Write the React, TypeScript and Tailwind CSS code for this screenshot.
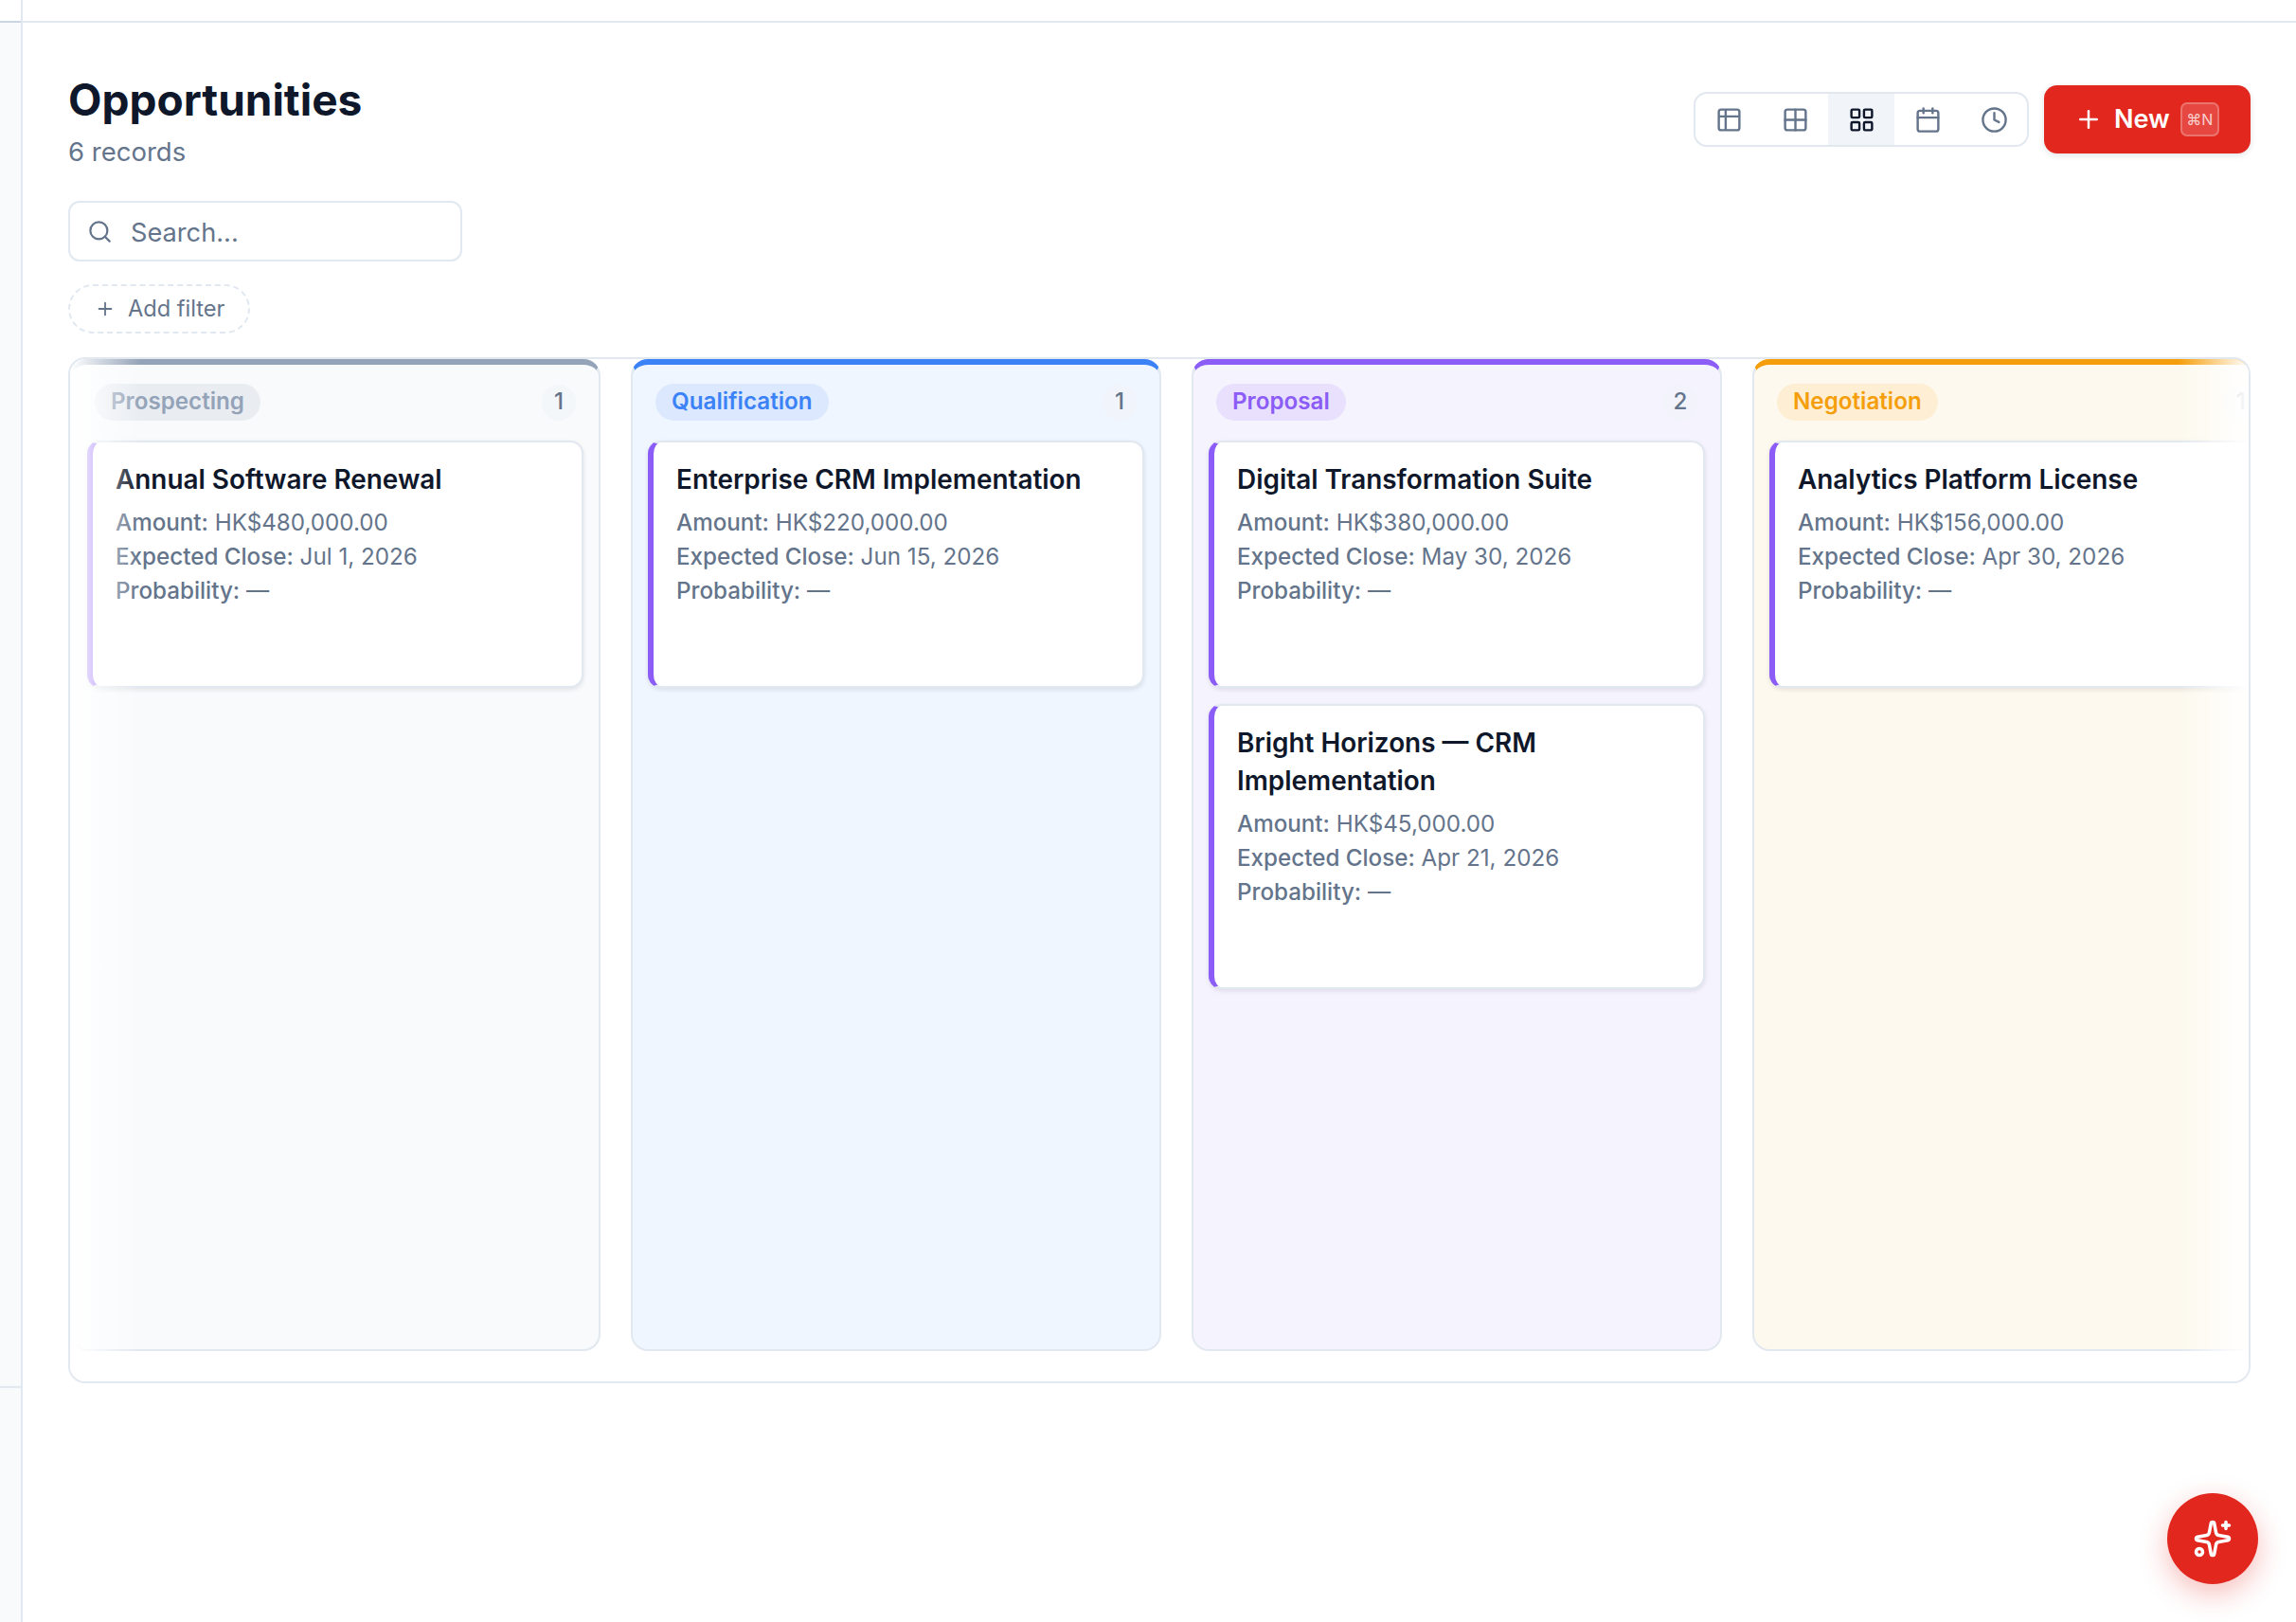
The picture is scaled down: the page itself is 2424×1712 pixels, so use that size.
import { Calendar, Clock, Grid2x2, LayoutGrid, Plus, Search, Sparkles, Table2 } from "lucide-react"

const columns = [
    {
        name: "Prospecting",
        count: 1,
        column: "bg-[#f8fafc] border-t-[#94a3b8]",
        badge: "bg-[#e9edf2] text-[#94a3b8]",
        cards: [{ title: "Annual Software Renewal", amount: "HK$480,000.00", close: "Jul 1, 2026" }],
    },
    {
        name: "Qualification",
        count: 1,
        column: "bg-[#eff6ff] border-t-[#3b82f6]",
        badge: "bg-[#dbe8fd] text-[#3b82f6]",
        cards: [{ title: "Enterprise CRM Implementation", amount: "HK$220,000.00", close: "Jun 15, 2026" }],
    },
    {
        name: "Proposal",
        count: 2,
        column: "bg-[#f5f3fe] border-t-[#8b5cf6]",
        badge: "bg-[#e8e0fd] text-[#8b5cf6]",
        cards: [
            { title: "Digital Transformation Suite", amount: "HK$380,000.00", close: "May 30, 2026" },
            { title: "Bright Horizons — CRM Implementation", amount: "HK$45,000.00", close: "Apr 21, 2026" },
        ],
    },
    {
        name: "Negotiation",
        count: 1,
        column: "bg-[#fdf9ee] border-t-[#f59e0b]",
        badge: "bg-[#fdeed4] text-[#f59e0b]",
        cards: [{ title: "Analytics Platform License", amount: "HK$156,000.00", close: "Apr 30, 2026" }],
    },
]

const views = [Table2, Grid2x2, LayoutGrid, Calendar, Clock]

function Card({ title, amount, close }: { title: string; amount: string; close: string }) {
    return (
        <div className="bg-white border-2 border-[#e2e8f0] border-l-[6px] border-l-[#8b5cf6] rounded-[14px] shadow-[0_2px_5px_rgba(15,23,42,0.1)] pl-[24px] pr-5 pt-[19px] pb-[82px]">
            <div className="text-[27.9px] leading-[40px] font-semibold text-[#0f172a]">{title}</div>
            <div className="mt-2 text-[24.2px] leading-[36px] text-[#64748b]">
                <div><span className="font-medium">Amount:</span> {amount}</div>
                <div><span className="font-medium">Expected Close:</span> {close}</div>
                <div><span className="font-medium">Probability:</span> —</div>
            </div>
        </div>
    )
}

export default function App() {
    return (
        <div className="relative flex h-screen overflow-hidden bg-white [font-family:Inter,sans-serif]">
            <div className="w-[24px] shrink-0 flex flex-col border-r-2 border-[#e2e8f0] bg-[#f8fafc]">
                <div className="h-[24px] shrink-0 bg-white border-b-2 border-[#cbd5e1]" />
                <div className="h-[1441px] shrink-0 border-b-2 border-[#e2e8f0]" />
            </div>

            <div className="flex-1 min-w-0">
                <div className="h-[24px] border-b-2 border-[#e2e8f0]" />
                <div className="pl-[48px] pr-[48px] pt-[53px]">
                    <div className="flex justify-between items-start">
                        <div>
                            <h1 className="text-[46px] leading-[56px] font-bold text-[#0f172a]">Opportunities</h1>
                            <div className="mt-[9px] text-[27.5px] leading-[36px] text-[#64748b]">6 records</div>
                        </div>
                        <div className="mt-[13px] flex items-center gap-[16px]">
                            <div className="flex border-2 border-[#e2e8f0] rounded-[14px] overflow-hidden h-[58px]">
                                {views.map((Icon, i) => (
                                    <div key={i} className={i === 2 ? "w-[70px] flex items-center justify-center bg-[#f1f5f9] text-[#0f172a]" : "w-[70px] flex items-center justify-center text-[#64748b]"}>
                                        <Icon size={29} />
                                    </div>
                                ))}
                            </div>
                            <button className="h-[72px] w-[218px] flex items-center pl-[32px] gap-[12px] bg-[#e2271f] rounded-[14px] text-white shadow-[0_2px_6px_rgba(15,23,42,0.12)]">
                                <Plus size={30} />
                                <span className="text-[27px] font-semibold">New</span>
                                <span className="-ml-[1px] w-[41px] h-[36px] flex items-center justify-center rounded-[7px] border-2 border-white/25 bg-white/15 text-[16px] text-white/75">⌘N</span>
                            </button>
                        </div>
                    </div>

                    <div className="mt-[34px] w-[416px] h-[64px] flex items-center gap-[19px] pl-[18px] border-2 border-[#e2e8f0] rounded-[12px]">
                        <Search size={27} className="text-[#64748b] shrink-0" />
                        <input placeholder="Search..." className="w-full min-w-0 pt-[5px] outline-none text-[27.2px] placeholder:text-[#64748b]" />
                    </div>

                    <button className="mt-[24px] w-[192px] h-[52px] flex items-center gap-[13px] pl-[26px] border-2 border-dashed border-[#e2e8f0] rounded-full text-[#64748b]">
                        <Plus size={22} />
                        <span className="text-[23.6px]">Add filter</span>
                    </button>

                    <div className="relative mt-[25px] border-2 border-[#e2e8f0] rounded-[18px] overflow-hidden pb-[32px]">
                        <div className="flex gap-[32px]">
                            {columns.map((col) => (
                                <div key={col.name} className={`w-[560px] h-[1047px] shrink-0 border-2 border-[#e2e8f0] border-t-[6px] rounded-[18px] px-[16px] ${col.column}`}>
                                    <div className="mt-[20px] px-[8px] flex items-center justify-between">
                                        <span className={`h-[39px] px-[17px] flex items-center rounded-full text-[24.2px] font-semibold ${col.badge}`}>{col.name}</span>
                                        <span className="w-[36px] h-[38px] flex items-center justify-center rounded-full bg-[#f1f5f9]/60 text-[24.2px] font-medium text-[#64748b]">{col.count}</span>
                                    </div>
                                    <div className="mt-[21px] flex flex-col gap-[17px]">
                                        {col.cards.map((c) => (
                                            <Card key={c.title} {...c} />
                                        ))}
                                    </div>
                                </div>
                            ))}
                        </div>
                        <div className="absolute left-0 top-0 bottom-0 w-[74px] bg-gradient-to-r from-white to-transparent" />
                        <div className="absolute right-0 top-0 bottom-0 w-[74px] bg-gradient-to-l from-white to-transparent" />
                    </div>
                </div>
            </div>

            <button className="absolute right-[40px] bottom-[40px] w-[96px] h-[96px] rounded-full bg-[#e2271f] text-white flex items-center justify-center shadow-[0_10px_30px_rgba(226,39,31,0.3)]">
                <Sparkles size={42} />
            </button>
        </div>
    )
}
